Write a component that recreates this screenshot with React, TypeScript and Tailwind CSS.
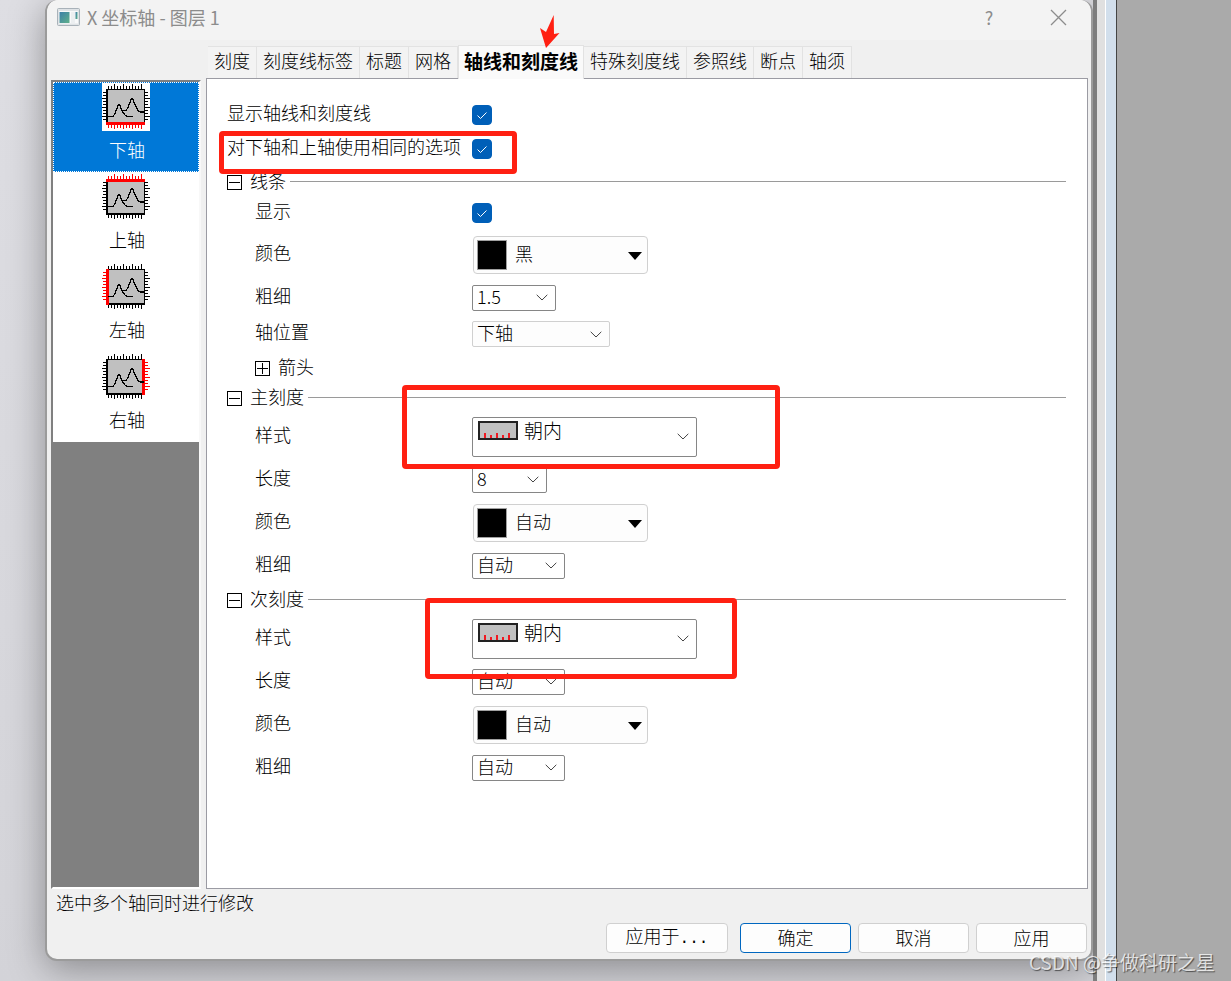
import { useState } from "react";
import type { ReactNode } from "react";
import { clsx } from "clsx";

type Side = "bottom" | "top" | "left" | "right";

const axes: { side: Side; label: string }[] = [
  { side: "bottom", label: "下轴" },
  { side: "top", label: "上轴" },
  { side: "left", label: "左轴" },
  { side: "right", label: "右轴" },
];

const tabs = [
  "刻度",
  "刻度线标签",
  "标题",
  "网格",
  "轴线和刻度线",
  "特殊刻度线",
  "参照线",
  "断点",
  "轴须",
];

const hTicks = [6, 9, 12, 15, 18, 21, 24, 27, 30, 33, 36, 39];
const vTicks = [9, 12, 15, 18, 21, 24, 27, 30, 33, 36];

const isLong = (n: number) => n % 9 === 3;
const isLongV = (n: number) => n % 9 === 6;

const AxisIcon = ({ side }: { side: Side }) => {
  const color = (s: Side) => (s === side ? "#f00" : "#000");
  return (
    <svg width="48" height="48" viewBox="0 0 48 48" shapeRendering="crispEdges">
      <rect width="48" height="48" fill="#fff" />
      <rect x="4" y="6" width="39" height="36" fill="#c0c0c0" />
      {hTicks.map((x) => (
        <g key={x}>
          <rect x={x} y={isLong(x) ? 1 : 3} width="1" height={isLong(x) ? 5 : 3} fill={color("top")} />
          <rect x={x} y="42" width="1" height={isLong(x) ? 4 : 3} fill={color("bottom")} />
        </g>
      ))}
      {vTicks.map((y) => (
        <g key={y}>
          <rect x={isLongV(y) ? 0 : 1} y={y} width={isLongV(y) ? 4 : 3} height="1" fill={color("left")} />
          <rect x="43" y={y} width={isLongV(y) ? 5 : 3} height="1" fill={color("right")} />
        </g>
      ))}
      {/* frame */}
      <rect x="4" y="6" width="39" height="1" />
      <rect x="4" y="6" width="2" height="36" />
      <rect x="42" y="6" width="1" height="36" />
      <rect x="4" y="40" width="39" height="2" />
      {side === "bottom" && <rect x="4" y="39" width="39" height="3" fill="#f00" />}
      {side === "top" && <rect x="4" y="6" width="39" height="3" fill="#f00" />}
      {side === "left" && <rect x="4" y="6" width="3" height="36" fill="#f00" />}
      {side === "right" && <rect x="40" y="6" width="3" height="36" fill="#f00" />}
      {/* the two peaks */}
      <path
        d="M6 33.5h5l2-3 2-5 1-3 1-1 1 1 1 3 2 4 2 2.500 2 1.500h6M21 27.500h3l2-3 2-5 1-3 1-1 1 1 1 3 2 4 2 4 2 1.500h4"
        fill="none"
        stroke="#000"
        strokeWidth="1.300"
      />
    </svg>
  );
};

const AppIcon = () => (
  <svg width="23" height="18" viewBox="0 0 23 18">
    <defs>
      <linearGradient id="screen" x1="0" y1="0" x2="1" y2="1">
        <stop offset="0" stopColor="#3c7fa8" />
        <stop offset="1" stopColor="#5fb08a" />
      </linearGradient>
    </defs>
    <rect x="0.500" y="0.500" width="22" height="17" rx="1" fill="#dfe3e6" stroke="#a9b2b9" />
    <rect x="2" y="3" width="19" height="12.500" fill="#f8f9fa" />
    <rect x="2.500" y="4" width="10" height="11" fill="url(#screen)" />
    <rect x="14" y="4" width="4" height="11" fill="#eceff1" />
    <rect x="18.500" y="4" width="2" height="7" fill="url(#screen)" />
  </svg>
);

const TickIcon = () => (
  <svg width="40" height="19" viewBox="0 0 40 19">
    <rect x="1" y="1" width="38" height="17" fill="#c0c0c0" stroke="#222" strokeWidth="2" />
    <path d="M7 12v5M19 12v5M31 12v5M13 14v3M25 14v3" stroke="#f01820" strokeWidth="2" />
  </svg>
);

const Chevron = () => (
  <svg width="12" height="7" viewBox="0 0 12 7" fill="none" stroke="#444">
    <path d="M0.700 0.800L6 6l5.300-5.200" />
  </svg>
);

const Checkbox = ({ id }: { id: string }) => (
  <span className="relative flex">
    <input
      id={id}
      type="checkbox"
      defaultChecked
      className="peer size-5 appearance-none rounded border border-[#868686] bg-white checked:border-[#005fb8] checked:bg-[#005fb8]"
    />
    <svg
      className="pointer-events-none absolute inset-0 hidden peer-checked:block"
      width="20"
      height="20"
      viewBox="0 0 20 20"
      fill="none"
      stroke="#fff"
    >
      <path d="M5.500 10.500l3 3 6-6" />
    </svg>
  </span>
);

type ComboProps = {
  id: string;
  value: string;
  className: string;
  light?: boolean;
};

const Combo = ({ id, value, className, light }: ComboProps) => (
  <span className={clsx("relative flex h-[26px]", className)}>
    <select
      id={id}
      className={clsx(
        "w-full appearance-none rounded-xs border pb-1 pl-1 leading-5",
        light ? "border-[#d0d0d0] bg-[#fdfdfd]" : "border-[#868686] bg-white"
      )}
    >
      <option>{value}</option>
    </select>
    <span className="pointer-events-none absolute inset-y-0 right-2 flex items-center">
      <Chevron />
    </span>
  </span>
);

const ColorCombo = ({ id, value }: { id: string; value: string }) => (
  <span className="relative ml-px flex h-[38px] w-[175px]">
    <select
      id={id}
      className="w-full appearance-none rounded border border-[#d0d0d0] bg-[#fdfdfd] pb-[3px] pl-[41px]"
    >
      <option>{value}</option>
    </select>
    <span className="pointer-events-none absolute inset-0 flex items-center justify-between pr-[6px] pl-1">
      <span className="size-[30px] border border-[#a0a0a0] bg-black" />
      <svg className="mt-[3px]" width="14" height="8" viewBox="0 0 14 8">
        <path d="M0 0h14L7 8z" />
      </svg>
    </span>
  </span>
);

const StyleCombo = ({ id }: { id: string }) => (
  <span className="relative flex h-10 w-[225px]">
    <select
      id={id}
      className="w-full appearance-none rounded-xs border border-[#868686] bg-white pb-[14px] pl-[51px] text-[19px]"
    >
      <option>朝内</option>
    </select>
    <span className="pointer-events-none absolute inset-0 flex items-center justify-between pr-2 pl-[6px]">
      <span className="pb-3">
        <TickIcon />
      </span>
      <Chevron />
    </span>
  </span>
);

type RowProps = {
  id: string;
  label: string;
  className: string;
  children: ReactNode;
};

const Row = ({ id, label, className, children }: RowProps) => (
  <div className={clsx("flex items-center", className)}>
    <label htmlFor={id} className="w-[245px] shrink-0 pb-[6px]">
      {label}
    </label>
    {children}
  </div>
);

const SubRow = ({ id, label, className, children }: RowProps) => (
  <div className={clsx("flex items-center pl-7", className)}>
    <label htmlFor={id} className="w-[217px] shrink-0 pb-[6px]">
      {label}
    </label>
    {children}
  </div>
);

const Toggle = ({ label, open }: { label: string; open: boolean }) => (
  <button type="button" className="flex items-center gap-2" aria-expanded={open}>
    <svg width="15" height="15" viewBox="0 0 15 15" fill="#fff" stroke="#000" shapeRendering="crispEdges">
      <path d={open ? "M0.500 0.500h14v14h-14zM2 7.500h11" : "M0.500 0.500h14v14h-14zM2 7.500h11M7.500 2v11"} />
    </svg>
    <span className="pb-1">{label}</span>
  </button>
);

const SectionHeader = ({ label }: { label: string }) => (
  <div className="flex h-[22px] items-center gap-1">
    <Toggle label={label} open />
    <div className="mb-px h-px flex-1 bg-[#9a9a9a]" />
  </div>
);

const Mark = ({ className }: { className: string }) => (
  <div className={clsx("pointer-events-none absolute rounded border-[5px] border-[#ff2012]", className)} />
);

type TicksSectionProps = {
  name: string;
  label: string;
  children: ReactNode;
};

const TicksSection = ({ name, label, children }: TicksSectionProps) => (
  <>
    <SectionHeader label={label} />
    <div className="mt-[6px] mb-[2px]">
      <SubRow id={`${name}-style`} label="样式" className="h-[43px]">
        <StyleCombo id={`${name}-style`} />
      </SubRow>
      <SubRow id={`${name}-length`} label="长度" className="h-[43px]">
        {children}
      </SubRow>
      <SubRow id={`${name}-color`} label="颜色" className="h-[43px]">
        <ColorCombo id={`${name}-color`} value="自动" />
      </SubRow>
      <SubRow id={`${name}-width`} label="粗细" className="h-[43px]">
        <Combo id={`${name}-width`} value="自动" className="w-[93px]" />
      </SubRow>
    </div>
  </>
);

function App() {
  const [axis, setAxis] = useState<Side>("bottom");
  const [tab, setTab] = useState("轴线和刻度线");

  return (
    <div className="relative flex min-h-screen overflow-hidden bg-[#dedee3] font-['Noto_Sans_CJK_SC',sans-serif] text-[18px] leading-[22px] font-light text-black">
      <main className="flex min-w-0 flex-1 bg-linear-to-b from-[#dedee3] to-[#d3d3d8] pb-5 pl-[45px]">
        <div className="flex min-w-0 flex-1 flex-col rounded-xl border-2 border-t-0 border-[#9b9b9b] bg-[#f0f0f0] shadow-[0_8px_36px_rgba(0,0,0,0.35)]">
          {/* Title bar */}
          <header className="flex h-10 items-center rounded-t-xl bg-[#f3f3f3] pr-6 pb-[6px] pl-[10px] text-[#8c8c8c]">
            <AppIcon />
            <h1 className="ml-[7px] flex-1 text-[18px] font-normal">X 坐标轴 - 图层 1</h1>
            <button type="button" className="w-[46px] font-normal">
              ?
            </button>
            <button type="button" aria-label="关闭" className="ml-[38px]">
              <svg width="17" height="17" viewBox="0 0 17 17" stroke="#8c8c8c" strokeWidth="1.300">
                <path d="M1 1l15 15M16 1L1 16" />
              </svg>
            </button>
          </header>

          <div className="flex flex-1 gap-[5px] pr-[3px] pl-1">
            {/* Axis list */}
            <aside className="mt-10 flex w-[150px] shrink-0 flex-col border-2 border-t-[#808080] border-r-[#f8f8f8] border-b-white border-l-[#808080] bg-[#808080]">
              {axes.map(({ side, label }) => (
                <button
                  key={side}
                  type="button"
                  onClick={() => setAxis(side)}
                  className={clsx(
                    "flex h-[90px] flex-col items-center gap-[7px] border border-dotted",
                    axis === side ? "border-white bg-[#0078d7] text-white" : "border-transparent bg-white"
                  )}
                >
                  <AxisIcon side={side} />
                  <span className="pl-[2px]">{label}</span>
                </button>
              ))}
            </aside>

            <div className="flex min-w-0 flex-1 flex-col pt-[5px]">
              {/* Tabs */}
              <nav className="z-10 -mb-px flex h-[34px] items-end pl-[2px]">
                {tabs.map((name) => (
                  <button
                    key={name}
                    type="button"
                    onClick={() => setTab(name)}
                    className={clsx(
                      "shrink-0 whitespace-nowrap border-t border-r border-[#e2e2e2]",
                      tab === name
                        ? "h-[34px] border-l bg-[#fafafa] px-[5px] pb-1 text-[19px] font-bold"
                        : "mb-px h-8 bg-[#f3f3f3] px-[6px] pb-[6px]"
                    )}
                  >
                    {name}
                  </button>
                ))}
              </nav>

              {/* Options */}
              <section className="relative flex-1 border border-[#9b9ba3] bg-white pt-[19px] pr-[21px] pl-5">
                <Row id="show-all" label="显示轴线和刻度线" className="h-[34px]">
                  <Checkbox id="show-all" />
                </Row>
                <Row id="same" label="对下轴和上轴使用相同的选项" className="mb-[5px] h-[34px]">
                  <Checkbox id="same" />
                </Row>

                <SectionHeader label="线条" />
                <SubRow id="line-show" label="显示" className="mt-[5px] mb-[5px] h-[30px]">
                  <Checkbox id="line-show" />
                </SubRow>
                <SubRow id="line-color" label="颜色" className="h-[43px]">
                  <ColorCombo id="line-color" value="黑" />
                </SubRow>
                <SubRow id="line-width" label="粗细" className="h-[43px]">
                  <Combo id="line-width" value="1.5" className="w-[84px]" />
                </SubRow>
                <SubRow id="line-pos" label="轴位置" className="h-[30px]">
                  <Combo id="line-pos" value="下轴" className="w-[138px]" light />
                </SubRow>
                <div className="flex h-[38px] items-center pl-7">
                  <Toggle label="箭头" open={false} />
                </div>

                <TicksSection name="major" label="主刻度">
                  <Combo id="major-length" value="8" className="w-[75px]" />
                </TicksSection>
                <TicksSection name="minor" label="次刻度">
                  <Combo id="minor-length" value="自动" className="w-[93px]" />
                </TicksSection>

                {/* Hand-drawn marks */}
                <Mark className="top-[52px] left-[12px] h-[43px] w-[298px]" />
                <Mark className="top-[306px] left-[195px] h-[84px] w-[378px]" />
                <Mark className="top-[519px] left-[218px] h-[81px] w-[312px]" />
                <svg
                  className="pointer-events-none absolute -top-[64px] left-[333px] z-20"
                  width="20"
                  height="33"
                  viewBox="0 0 20 33"
                  fill="#ff2012"
                >
                  <path d="M13.700 0L14 19l5.500-1L6 33 0 13l6 4z" />
                </svg>
              </section>
            </div>
          </div>

          {/* Footer */}
          <footer className="flex flex-col pr-1 pb-[6px]">
            <p className="mt-[2px] ml-[9px]">选中多个轴同时进行修改</p>
            <div className="mt-[10px] flex justify-end gap-[7px]">
              <button
                type="button"
                className="mr-[5px] h-[30px] w-[122px] rounded border border-[#d0d0d0] bg-[#fdfdfd] pb-[3px]"
              >
                应用于<span className="font-['Liberation_Mono',monospace] text-[16px]">...</span>
              </button>
              <button type="button" className="h-[30px] w-[111px] rounded border border-[#0067c0] bg-[#fdfdfd] pb-[3px]">
                确定
              </button>
              <button type="button" className="h-[30px] w-[111px] rounded border border-[#d0d0d0] bg-[#fdfdfd] pb-[3px]">
                取消
              </button>
              <button type="button" className="h-[30px] w-[111px] rounded border border-[#d0d0d0] bg-[#fdfdfd] pb-[3px]">
                应用
              </button>
            </div>
          </footer>
        </div>
      </main>

      {/* Window edges behind the dialog */}
      <div className="z-10 w-1 bg-[#7d7d7d]" />
      <div className="z-10 w-2 bg-[#e0e0e0]" />
      <div className="z-10 w-px bg-white" />
      <div className="z-10 w-[10px] bg-[#d2dfec]" />
      <div className="z-10 w-px bg-[#444]" />
      <div className="z-10 w-[114px] bg-[#aaaaaa]" />

      <p className="absolute right-4 bottom-2 z-20 text-[19px] font-normal text-white/75 [text-shadow:1px_1px_1px_rgba(0,0,0,0.55)]">
        CSDN @争做科研之星
      </p>
    </div>
  );
}

export default App;
